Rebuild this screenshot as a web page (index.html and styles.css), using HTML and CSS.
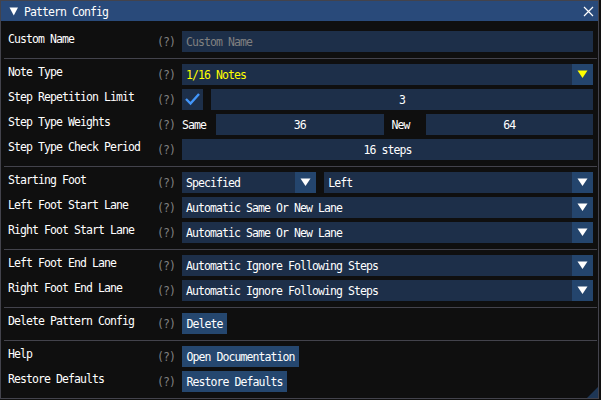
FILE: index.html
```html
<!DOCTYPE html>
<html>
<head>
<meta charset="utf-8">
<link rel="stylesheet" href="styles.css">
</head>
<body>
<div class="window">
  <div class="titlebar">
    <svg class="collapse" width="10" height="10" viewBox="0 0 10 10"><polygon points="0.5,0.5 9,0.5 4.75,8.5" fill="#fff"/></svg>
    <span class="title">Pattern Config</span>
    <svg class="close" width="11" height="11" viewBox="0 0 11 11"><path d="M1 1 L10 10 M10 1 L1 10" stroke="#fff" stroke-width="1.2" fill="none"/></svg>
  </div>
  <div class="body">
    <div class="row">
      <div class="label">Custom Name</div><div class="help">(?)</div>
      <div class="field placeholder">Custom Name</div>
    </div>
    <div class="sep"></div>
    <div class="row">
      <div class="label">Note Type</div><div class="help">(?)</div>
      <div class="combo yellow">
        <div class="combo-text">1/16 Notes</div>
        <div class="combo-arrow"><svg width="21" height="21" viewBox="0 0 21 21"><polygon points="5.5,6.5 15.5,6.5 10.5,14" fill="#ffff00"/></svg></div>
      </div>
    </div>
    <div class="row">
      <div class="label">Step Repetition Limit</div><div class="help">(?)</div>
      <div class="pair">
        <div class="checkbox"><svg width="21" height="21" viewBox="0 0 21 21"><polyline points="4,10 8.5,14.5 17,5" fill="none" stroke="#4296fa" stroke-width="2.4"/></svg></div>
        <div class="field num">3</div>
      </div>
    </div>
    <div class="row">
      <div class="label">Step Type Weights</div><div class="help">(?)</div>
      <div class="pair weights">
        <span class="inline-label">Same</span>
        <div class="field num">36</div>
        <span class="inline-label second">New</span>
        <div class="field num">64</div>
      </div>
    </div>
    <div class="row">
      <div class="label">Step Type Check Period</div><div class="help">(?)</div>
      <div class="field num">16 steps</div>
    </div>
    <div class="sep"></div>
    <div class="row">
      <div class="label">Starting Foot</div><div class="help">(?)</div>
      <div class="pair">
        <div class="combo one">
          <div class="combo-text">Specified</div>
          <div class="combo-arrow"><svg width="21" height="21" viewBox="0 0 21 21"><polygon points="5.5,6.5 15.5,6.5 10.5,14" fill="#fff"/></svg></div>
        </div>
        <div class="combo two">
          <div class="combo-text">Left</div>
          <div class="combo-arrow"><svg width="21" height="21" viewBox="0 0 21 21"><polygon points="5.5,6.5 15.5,6.5 10.5,14" fill="#fff"/></svg></div>
        </div>
      </div>
    </div>
    <div class="row">
      <div class="label">Left Foot Start Lane</div><div class="help">(?)</div>
      <div class="combo">
        <div class="combo-text">Automatic Same Or New Lane</div>
        <div class="combo-arrow"><svg width="21" height="21" viewBox="0 0 21 21"><polygon points="5.5,6.5 15.5,6.5 10.5,14" fill="#fff"/></svg></div>
      </div>
    </div>
    <div class="row">
      <div class="label">Right Foot Start Lane</div><div class="help">(?)</div>
      <div class="combo">
        <div class="combo-text">Automatic Same Or New Lane</div>
        <div class="combo-arrow"><svg width="21" height="21" viewBox="0 0 21 21"><polygon points="5.5,6.5 15.5,6.5 10.5,14" fill="#fff"/></svg></div>
      </div>
    </div>
    <div class="sep"></div>
    <div class="row">
      <div class="label">Left Foot End Lane</div><div class="help">(?)</div>
      <div class="combo">
        <div class="combo-text">Automatic Ignore Following Steps</div>
        <div class="combo-arrow"><svg width="21" height="21" viewBox="0 0 21 21"><polygon points="5.5,6.5 15.5,6.5 10.5,14" fill="#fff"/></svg></div>
      </div>
    </div>
    <div class="row">
      <div class="label">Right Foot End Lane</div><div class="help">(?)</div>
      <div class="combo">
        <div class="combo-text">Automatic Ignore Following Steps</div>
        <div class="combo-arrow"><svg width="21" height="21" viewBox="0 0 21 21"><polygon points="5.5,6.5 15.5,6.5 10.5,14" fill="#fff"/></svg></div>
      </div>
    </div>
    <div class="sep"></div>
    <div class="row">
      <div class="label">Delete Pattern Config</div><div class="help">(?)</div>
      <div class="button">Delete</div>
    </div>
    <div class="sep"></div>
    <div class="row">
      <div class="label">Help</div><div class="help">(?)</div>
      <div class="button">Open Documentation</div>
    </div>
    <div class="row">
      <div class="label">Restore Defaults</div><div class="help">(?)</div>
      <div class="button">Restore Defaults</div>
    </div>
  </div>
  <div class="grip"></div>
</div>
</body>
</html>
```
FILE: styles.css
```css
html, body {
  margin: 0;
  padding: 0;
  background: #101010;
}
body {
  font-family: "DejaVu Sans Mono", "Liberation Mono", monospace;
  font-size: 11.5px;
  letter-spacing: -0.92px;
  color: #ffffff;
}
.window {
  position: relative;
  width: 599px;
  height: 399px;
  box-sizing: border-box;
  border: 1px solid #43434c;
  background: #0f0f0f;
  display: flex;
  flex-direction: column;
}
.titlebar {
  height: 20px;
  background: #294a7a;
  display: flex;
  align-items: flex-start;
  flex-shrink: 0;
}
.collapse {
  margin: 6px 0 0 7.5px;
}
.title {
  margin: 1px 0 0 5.5px;
  line-height: 20px;
  flex: 1;
}
.close {
  margin: 5px 4px 0 0;
}
.body {
  padding: 10px 5px 0 7px;
  display: flex;
  flex-direction: column;
  gap: 4px;
}
.row {
  display: grid;
  grid-template-columns: 149px 25px 1fr;
  height: 21px;
}
.label {
  line-height: 17px;
  white-space: nowrap;
}
.help {
  color: #808080;
  padding-top: 1px;
  line-height: 20px;
}
.field {
  height: 21px;
  box-sizing: border-box;
  background: #1d2f49;
  padding: 1px 4px 0;
  line-height: 20px;
  white-space: nowrap;
  overflow: hidden;
}
.placeholder {
  color: #808080;
}
.num {
  text-align: center;
  flex: 1;
}
.sep {
  height: 1px;
  background: #43434c;
  margin: 2px -4px 1px;
}
.pair {
  display: flex;
  gap: 8px;
}
.pair.weights {
  gap: 0;
}
.inline-label {
  width: 26px;
  margin-right: 8px;
  padding-top: 1px;
  line-height: 20px;
  flex-shrink: 0;
}
.inline-label.second {
  margin-left: 8px;
}
.checkbox {
  width: 21px;
  height: 21px;
  background: #1d2f49;
  flex-shrink: 0;
}
.checkbox svg, .combo-arrow svg {
  display: block;
}
.combo {
  display: flex;
  height: 21px;
}
.combo.one {
  flex: 1;
}
.combo.two {
  flex: 2;
}
.combo-text {
  flex: 1;
  background: #1d2f49;
  padding: 1px 4px 0;
  line-height: 20px;
  white-space: nowrap;
  overflow: hidden;
}
.combo-arrow {
  width: 21px;
  height: 21px;
  background: #24456d;
  flex-shrink: 0;
}
.yellow .combo-text {
  color: #ffff00;
}
.button {
  justify-self: start;
  height: 21px;
  box-sizing: border-box;
  background: #25476f;
  padding: 1px 4px 0 4.5px;
  line-height: 20px;
  white-space: nowrap;
}
.grip {
  position: absolute;
  right: 0;
  bottom: 0;
  width: 11px;
  height: 11px;
  background: #1e3756;
  clip-path: polygon(100% 0, 100% 100%, 0 100%);
}
```
